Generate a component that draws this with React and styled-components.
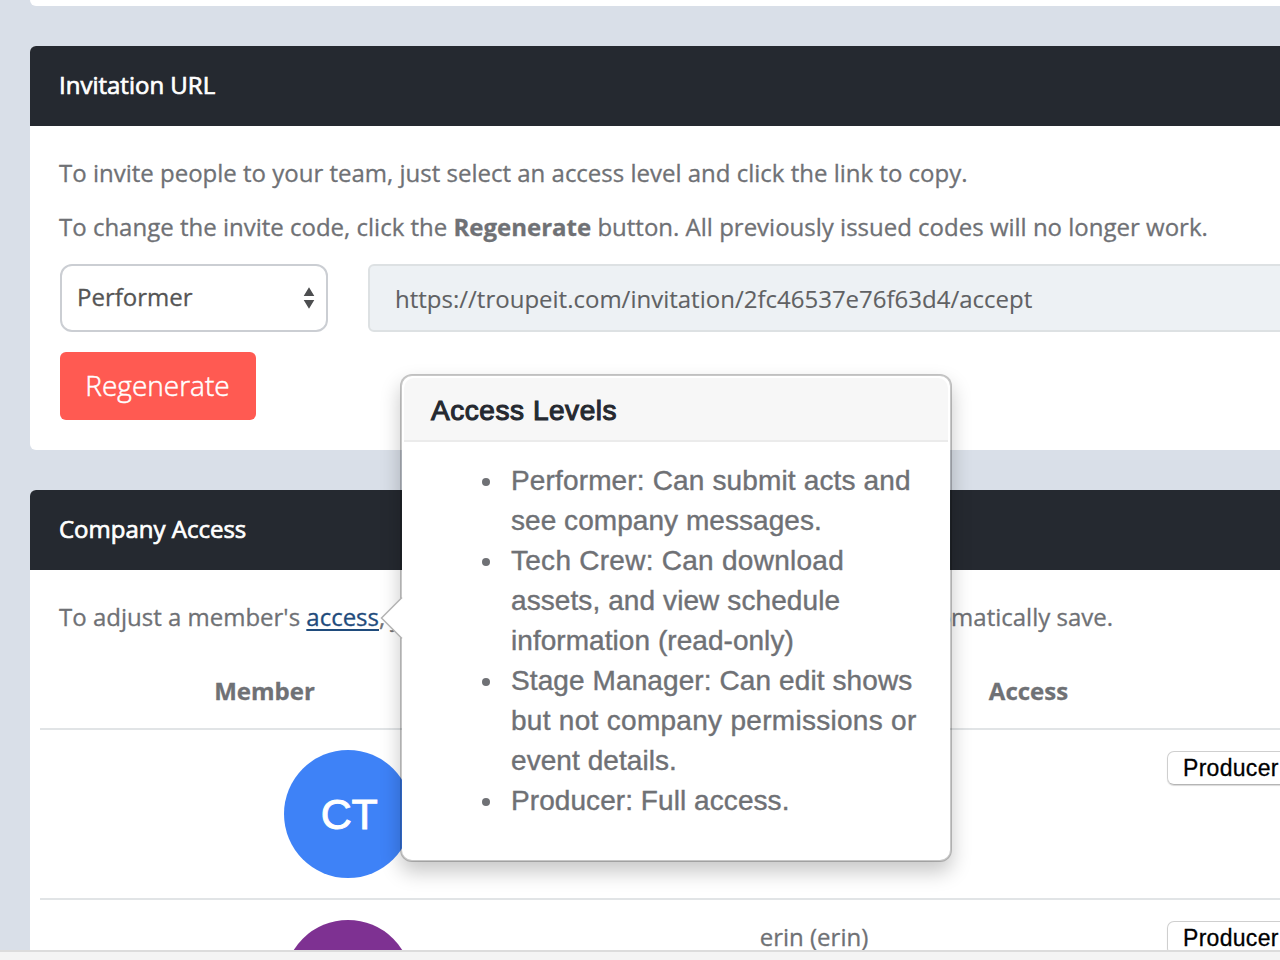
import React from "react";
import styled, { createGlobalStyle } from "styled-components";

const GlobalStyle = createGlobalStyle`
  * { box-sizing: border-box; }
  body {
    margin: 0;
    overflow: hidden;
    font-family: "Open Sans", sans-serif;
    font-size: 24px;
    color: #6f7175;
    -webkit-text-stroke: 0.3px currentColor;
  }
`;

const Page = styled.div`
  display: flex;
  flex-direction: column;
  width: 1280px;
  height: 960px;
  background: #d9dfe8;
  overflow: hidden;
`;

const Viewport = styled.main`
  position: relative;
  height: 950px;
  padding-left: 30px;
  overflow: hidden;
`;

const StatusBar = styled.footer`
  height: 10px;
  border-top: 2px solid #dcdcdc;
  background: #f4f4f4;
`;

const PreviousPanel = styled.div`
  width: 1290px;
  height: 6px;
  margin-bottom: 40px;
  border-radius: 0 0 6px 6px;
  background: #fff;
`;

const Panel = styled.section`
  width: 1290px;
  height: ${(p) => p.$height}px;
  margin-bottom: 40px;
  border-radius: 6px;
  background: #fff;
  overflow: hidden;
`;

const PanelTitle = styled.h2`
  margin: 0;
  height: 80px;
  padding-left: 29px;
  background: #252930;
  color: #fff;
  font-size: 24px;
  font-weight: 400;
  line-height: 78px;
  -webkit-text-stroke: 0.7px #fff;
`;

const PanelBody = styled.div`
  padding: 29px 30px 0;
`;

const Paragraph = styled.p`
  margin: 0 0 18px -1px;
  line-height: 36px;
  white-space: nowrap;
`;

const FieldRow = styled.div`
  display: flex;
  gap: 40px;
  margin: 19px 0 20px;
`;

const Select = styled.div`
  display: flex;
  flex: none;
  align-items: center;
  justify-content: space-between;
  width: 268px;
  height: 68px;
  padding: 0 11px 0 15px;
  border: 2px solid #cbced3;
  border-radius: 12px;
  color: #555;
  line-height: 60px;
`;

const SelectValue = styled.span`
  padding-bottom: 2px;
`;

const UrlField = styled.div`
  flex: none;
  width: 940px;
  height: 68px;
  padding-left: 25px;
  border: 2px solid #dde1e3;
  border-radius: 6px;
  background: #edf1f4;
  color: #606163;
  line-height: 66px;
  -webkit-text-stroke-width: 0.1px;
`;

const RegenerateButton = styled.button`
  display: block;
  width: 196px;
  height: 68px;
  padding: 0 1px 2px 0;
  border: 0;
  border-radius: 6px;
  background: #ff5a52;
  color: #fff;
  font: 300 28px/66px "Open Sans", sans-serif;
  -webkit-text-stroke: 0.5px #fff;
`;

const Intro = styled.p`
  display: flex;
  justify-content: space-between;
  width: 1054px;
  margin: 0 0 0 -1px;
  line-height: 36px;
  white-space: nowrap;
`;

const AccessLink = styled.a`
  color: #1f4b7c;
  text-decoration: underline;
  text-decoration-thickness: 2px;
  text-underline-offset: 3px;
`;

const Members = styled.div`
  margin: 23px -30px 0 -20px;
`;

const MembersHead = styled.div`
  display: grid;
  grid-template-columns: 449px 1079px;
  height: 72px;
  border-bottom: 2px solid #e1e4e6;
  font-weight: 700;
  line-height: 32px;
  padding-top: 17px;
  text-align: center;
`;

const MemberRow = styled.div`
  display: grid;
  grid-template-columns: 616px 316px 195px 240px;
  height: 170px;
  padding-top: 20px;
  border-bottom: 2px solid #e1e4e6;
`;

const Avatar = styled.div`
  justify-self: center;
  width: 128px;
  height: 128px;
  padding-left: 2px;
  border-radius: 50%;
  background: ${(p) => p.$color};
  color: #fff;
  font: 500 43px/129px "Liberation Sans", Arial, sans-serif;
  letter-spacing: -0.5px;
  text-align: center;
  -webkit-text-stroke: 0.9px #fff;
`;

const MemberName = styled.div`
  text-align: center;
  line-height: 34px;
`;

const RoleSelect = styled.div`
  grid-column: 4;
  height: 34px;
  margin-top: 1px;
  padding-left: 15px;
  border: 1px solid #cfcfcf;
  border-bottom-color: #b5b5b5;
  border-radius: 7px;
  box-shadow: 0 1px 1px rgba(0, 0, 0, 0.15);
  color: #000;
  font: 23px/33px "Liberation Sans", Arial, sans-serif;
  letter-spacing: 0.3px;
`;

const Popover = styled.aside`
  position: absolute;
  left: 400px;
  top: 374px;
  width: 552px;
  height: 488px;
  padding: 2px;
  border: 2px solid rgba(0, 0, 0, 0.22);
  border-radius: 12px;
  background: #fff;
  background-clip: padding-box;
  box-shadow: 0 10px 20px rgba(0, 0, 0, 0.22);
  font-family: "Liberation Sans", Arial, sans-serif;
`;

const PopoverArrow = styled.svg`
  position: absolute;
  left: -22px;
  top: 220px;
`;

const PopoverTitle = styled.h3`
  margin: 0;
  height: 64px;
  padding-left: 27px;
  border-bottom: 2px solid #ebebeb;
  border-radius: 10px 10px 0 0;
  background: #f7f7f7;
  color: #252930;
  font-size: 28px;
  font-weight: 400;
  line-height: 66px;
  letter-spacing: 0.55px;
  -webkit-text-stroke: 1.1px #252930;
`;

const LevelList = styled.ul`
  margin: 19px 0 0;
  padding-left: 101px;
  font-size: 28px;
  line-height: 40px;
  white-space: nowrap;
  -webkit-text-stroke-width: 0.4px;
`;

const Line = styled.span`
  display: block;
  padding-left: 6px;
  letter-spacing: ${(p) => p.$spacing}px;
`;

const LEVELS = [
  [["Performer: Can submit acts and", 0.15], ["see company messages.", 0.05]],
  [["Tech Crew: Can download", 0.27], ["assets, and view schedule", 0.09], ["information (read-only)", 0.05]],
  [["Stage Manager: Can edit shows", 0.1], ["but not company permissions or", 0.29], ["event details.", 0.07]],
  [["Producer: Full access.", 0.07]],
];

const SortArrows = () => (
  <svg width="12" height="24" viewBox="0 0 12 24" fill="#4d4e50">
    <path d="M6 1.200 11.300 10H.7zM.7 14h10.600L6 22.800z" />
  </svg>
);

export default function App() {
  return (
    <Page>
      <GlobalStyle />
      <Viewport>
        <PreviousPanel />
        <Panel $height={404}>
          <PanelTitle>Invitation URL</PanelTitle>
          <PanelBody>
            <Paragraph>To invite people to your team, just select an access level and click the link to copy.</Paragraph>
            <Paragraph>
              To change the invite code, click the <b>Regenerate</b> button. All previously issued codes will no longer work.
            </Paragraph>
            <FieldRow>
              <Select>
                <SelectValue>Performer</SelectValue>
                <SortArrows />
              </Select>
              <UrlField>https://troupeit.com/invitation/2fc46537e76f63d4/accept</UrlField>
            </FieldRow>
            <RegenerateButton>Regenerate</RegenerateButton>
          </PanelBody>
        </Panel>
        <Panel $height={700}>
          <PanelTitle>Company Access</PanelTitle>
          <PanelBody>
            <Intro>
              <span>
                To adjust a member's <AccessLink>access</AccessLink>, just select a new level.
              </span>
              <span>It will automatically save.</span>
            </Intro>
            <Members>
              <MembersHead>
                <span>Member</span>
                <span>Access</span>
              </MembersHead>
              <MemberRow>
                <Avatar $color="#3e82f7">CT</Avatar>
                <RoleSelect>Producer</RoleSelect>
              </MemberRow>
              <MemberRow>
                <Avatar $color="#7e3192" />
                <MemberName>erin (erin)</MemberName>
                <RoleSelect>Producer</RoleSelect>
              </MemberRow>
            </Members>
          </PanelBody>
        </Panel>
        <Popover>
          <PopoverTitle>Access Levels</PopoverTitle>
          <LevelList>
            {LEVELS.map((lines) => (
              <li key={lines[0][0]}>
                {lines.map(([text, spacing]) => (
                  <Line key={text} $spacing={spacing}>{text}</Line>
                ))}
              </li>
            ))}
          </LevelList>
          <PopoverArrow width="24" height="44" viewBox="0 0 24 44">
            <path d="M22 1.500 1.500 22 22 42.500h2v-41z" fill="#fff" />
            <path d="M22 1.500 1.500 22 22 42.500" fill="none" stroke="#b3b3b3" strokeWidth="1.500" />
          </PopoverArrow>
        </Popover>
      </Viewport>
      <StatusBar />
    </Page>
  );
}
